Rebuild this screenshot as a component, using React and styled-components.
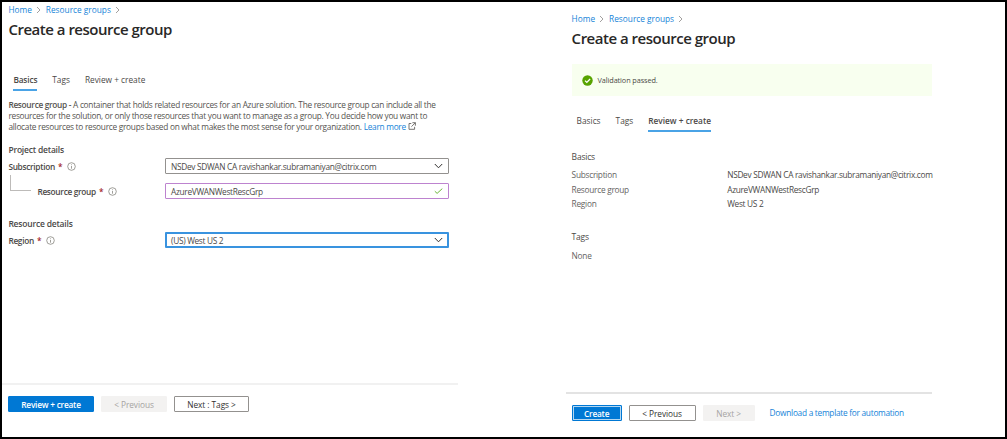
import React from 'react';
import styled, { createGlobalStyle } from 'styled-components';

const GlobalStyle = createGlobalStyle`
  *, *::before, *::after { box-sizing: border-box; }
  body { margin: 0; background: #fff; }
`;

const Frame = styled.div`
  display: flex;
  justify-content: space-between;
  width: 1007px;
  height: 439px;
  overflow: hidden;
  border: 2px solid #000;
  background: #fff;
  color: #4b4947;
  font-family: 'Open Sans', 'Noto Sans', sans-serif;
  font-size: 8.3px;
  line-height: 11px;
  letter-spacing: -0.27px;
  white-space: nowrap;
`;

const Pane = styled.section`
  display: flex;
  flex-direction: column;
  width: ${(p) => p.$width}px;
  margin-right: ${(p) => p.$gap || 0}px;
  padding-top: ${(p) => p.$top}px;
`;

const Body = styled.div`
  flex: 1;
  padding-left: ${(p) => p.$inset}px;
`;

const Label = styled.span`
  font-weight: ${(p) => (p.$strong ? 600 : 400)};
  letter-spacing: -0.3px;
`;

const Breadcrumb = styled.nav`
  display: flex;
  align-items: center;
  height: 11px;
  letter-spacing: 0;
`;

const Link = styled.a`
  color: #1583d8;
  text-decoration: none;
`;

const CrumbArrow = styled.svg`
  width: 5px;
  height: 8px;
  margin: 0 5px 0 4px;
  fill: none;
  stroke: #8a8886;
  stroke-width: 0.8;
`;

const Title = styled.h1`
  margin: 4px 0 0;
  height: 22px;
  color: #292827;
  font-size: 15px;
  line-height: 21px;
  font-weight: 600;
  letter-spacing: -0.49px;
`;

const TabBar = styled.div`
  display: flex;
  gap: 15px;
  margin-top: ${(p) => p.$top}px;
  padding-left: 5px;
  letter-spacing: 0;
`;

const Tab = styled.div`
  height: 17px;
  border-bottom: 2px solid ${(p) => (p.$active ? '#4aa3e6' : 'transparent')};
  font-weight: ${(p) => (p.$active ? 600 : 400)};
  letter-spacing: ${(p) => p.$track || 0}px;
`;

const Description = styled.p`
  margin: 8px 0 0;
  color: #55534f;
`;

const DescriptionLine = styled.span`
  display: block;
  height: 11px;
`;

const ExternalIcon = styled.svg`
  width: 8px;
  height: 8px;
  margin-left: 2px;
  fill: none;
  stroke: #55534f;
  stroke-width: 0.8;
`;

const SectionTitle = styled.h2`
  margin: ${(p) => p.$top}px 0 0;
  height: 12px;
  font-size: 8.5px;
  line-height: 12px;
  font-weight: ${(p) => (p.$light ? 400 : 600)};
  letter-spacing: -0.2px;
`;

const FormRow = styled.div`
  display: flex;
  align-items: center;
  height: 16px;
  margin-top: ${(p) => p.$top}px;
`;

const FormLabel = styled.div`
  display: flex;
  align-items: center;
  width: 156.6px;
  height: 16px;
`;

const Required = styled.span`
  margin-left: 3px;
  color: #a4262c;
  font-weight: 600;
`;

const InfoIcon = styled.svg`
  width: 9px;
  height: 9px;
  margin-left: 5px;
  fill: none;
  stroke: #77756f;
  stroke-width: 0.7;
`;

const Branch = styled.span`
  align-self: flex-start;
  width: 21px;
  height: 16px;
  margin: -8px 6px 0 2px;
  border: solid #bdbbb9;
  border-width: 0 0 1px 1px;
`;

const Field = styled.div`
  display: flex;
  align-items: center;
  justify-content: space-between;
  width: 284px;
  height: 16px;
  padding: 0 ${(p) => (p.$heavy ? 4 : 5)}px;
  border: ${(p) => (p.$heavy ? 2 : 1)}px solid ${(p) => p.$line};
  border-radius: 1px;
`;

const FieldIcon = styled.svg`
  width: 9px;
  height: 6px;
  fill: none;
  stroke: ${(p) => p.$color};
  stroke-width: 1;
`;

const Footer = styled.footer`
  display: flex;
  height: ${(p) => p.$height}px;
  padding: ${(p) => p.$top}px 0 0 6px;
  border-top: ${(p) => p.$line};
`;

const Button = styled.button`
  flex: none;
  width: ${(p) => p.$width}px;
  height: 16px;
  margin: 0 7px 0 0;
  padding: 0;
  border: 1px solid #93918f;
  border-radius: 1px;
  background: #fff;
  color: #323130;
  font: inherit;
  line-height: 13px;
  letter-spacing: -0.05px;
`;

const PrimaryButton = styled(Button)`
  border-color: #0078d4;
  background: #0078d4;
  box-shadow: ${(p) => (p.$focused ? 'inset 0 0 0 1px #b3d7f2' : 'none')};
  color: #fff;
  font-weight: 600;
  letter-spacing: -0.22px;
`;

const DisabledButton = styled(Button)`
  border-color: #f3f2f1;
  background: #f3f2f1;
  color: #a5a3a1;
`;

const FooterLink = styled(Link)`
  margin-left: 8px;
  line-height: 15px;
`;

const Banner = styled.div`
  display: flex;
  align-items: center;
  height: 32px;
  margin-top: 14px;
  padding-left: 10px;
  background: #f8ffef;
  font-size: 7.3px;
`;

const BannerText = styled.span`
  letter-spacing: -0.1px;
`;

const PassedIcon = styled.svg`
  width: 11px;
  height: 11px;
  margin-right: 5px;
`;

const SummaryRow = styled.div`
  display: grid;
  grid-template-columns: 155.6px 1fr;
  height: 14.7px;
  line-height: 14px;
`;

const SummaryKey = styled.span`
  color: #65635f;
`;

const Summary = styled.div`
  margin-top: ${(p) => p.$top}px;
`;

const Crumbs = () => (
  <Breadcrumb>
    <Link>Home</Link>
    <CrumbArrow viewBox="0 0 5 8"><path d="M1 1l3 3-3 3" /></CrumbArrow>
    <Link>Resource groups</Link>
    <CrumbArrow viewBox="0 0 5 8"><path d="M1 1l3 3-3 3" /></CrumbArrow>
  </Breadcrumb>
);

const Info = () => (
  <InfoIcon viewBox="0 0 9 9">
    <circle cx="4.5" cy="4.5" r="3.8" />
    <path d="M4.5 4v2.7M4.5 2.4v.8" />
  </InfoIcon>
);

const Chevron = () => (
  <FieldIcon viewBox="0 0 9 6" $color="#323130"><path d="M.8 1l3.7 3.8L8.2 1" /></FieldIcon>
);

export default function App() {
  return (
    <>
      <GlobalStyle />
      <Frame>
        <Pane $width={456} $top={2}>
          <Body $inset={6.4}>
            <Crumbs />
            <Title>Create a resource group</Title>
            <TabBar $top={33}>
              <Tab $active $track={-0.15}>Basics</Tab>
              <Tab>Tags</Tab>
              <Tab>Review + create</Tab>
            </TabBar>
            <Description>
              <DescriptionLine>
                <Label $strong>Resource group - </Label>
                A container that holds related resources for an Azure solution. The resource group can include all the
              </DescriptionLine>
              <DescriptionLine>
                resources for the solution, or only those resources that you want to manage as a group. You decide how you want to
              </DescriptionLine>
              <DescriptionLine>
                allocate resources to resource groups based on what makes the most sense for your organization.{' '}
                <Link>Learn more</Link>
                <ExternalIcon viewBox="0 0 8 8">
                  <path d="M3.3 1.5H1v5.8h5.6V4.8M4.4.7h3v3M7.3.8L3.4 4.7" />
                </ExternalIcon>
              </DescriptionLine>
            </Description>
            <SectionTitle $top={12}>Project details</SectionTitle>
            <FormRow $top={2}>
              <FormLabel>
                <Label $strong>Subscription</Label>
                <Required>*</Required>
                <Info />
              </FormLabel>
              <Field $line="#93918f">
                <Label>NSDev SDWAN CA ravishankar.subramaniyan@citrix.com</Label>
                <Chevron />
              </Field>
            </FormRow>
            <FormRow $top={9}>
              <FormLabel>
                <Branch />
                <Label $strong>Resource group</Label>
                <Required>*</Required>
                <Info />
              </FormLabel>
              <Field $line="#bd83cf">
                <Label>AzureVWANWestRescGrp</Label>
                <FieldIcon viewBox="0 0 9 6" $color="#6bb739"><path d="M.8 3.2l2.3 2.2L8.3.6" /></FieldIcon>
              </Field>
            </FormRow>
            <SectionTitle $top={19}>Resource details</SectionTitle>
            <FormRow $top={2}>
              <FormLabel>
                <Label $strong>Region</Label>
                <Required>*</Required>
                <Info />
              </FormLabel>
              <Field $heavy $line="#3993df">
                <Label>(US) West US 2</Label>
                <Chevron />
              </Field>
            </FormRow>
          </Body>
          <Footer $height={54} $top={11} $line="2px solid #f1f1f1">
            <PrimaryButton $width={86}>Review + create</PrimaryButton>
            <DisabledButton $width={66}>&lt; Previous</DisabledButton>
            <Button $width={75}>Next : Tags &gt;</Button>
          </Footer>
        </Pane>
        <Pane $width={366} $gap={73.4} $top={11}>
          <Body $inset={6}>
            <Crumbs />
            <Title>Create a resource group</Title>
            <Banner>
              <PassedIcon viewBox="0 0 11 11">
                <circle cx="5.5" cy="5.5" r="5.2" fill="#57a300" />
                <path d="M3 5.6l1.8 1.8L8.1 4" fill="none" stroke="#fff" strokeWidth="1.3" />
              </PassedIcon>
              <BannerText>Validation passed.</BannerText>
            </Banner>
            <TabBar $top={19}>
              <Tab>Basics</Tab>
              <Tab>Tags</Tab>
              <Tab $active>Review + create</Tab>
            </TabBar>
            <SectionTitle $light $top={19}>Basics</SectionTitle>
            <Summary $top={5}>
              <SummaryRow><SummaryKey>Subscription</SummaryKey><Label>NSDev SDWAN CA ravishankar.subramaniyan@citrix.com</Label></SummaryRow>
              <SummaryRow><SummaryKey>Resource group</SummaryKey><Label>AzureVWANWestRescGrp</Label></SummaryRow>
              <SummaryRow><SummaryKey>Region</SummaryKey><Label>West US 2</Label></SummaryRow>
            </Summary>
            <SectionTitle $light $top={19}>Tags</SectionTitle>
            <Summary $top={6}>
              <SummaryRow><SummaryKey>None</SummaryKey></SummaryRow>
            </Summary>
          </Body>
          <Footer $height={45} $top={11} $line="2px solid #e3e3e3">
            <PrimaryButton $focused $width={50}>Create</PrimaryButton>
            <Button $width={67}>&lt; Previous</Button>
            <DisabledButton $width={52}>Next &gt;</DisabledButton>
            <FooterLink>Download a template for automation</FooterLink>
          </Footer>
        </Pane>
      </Frame>
    </>
  );
}
